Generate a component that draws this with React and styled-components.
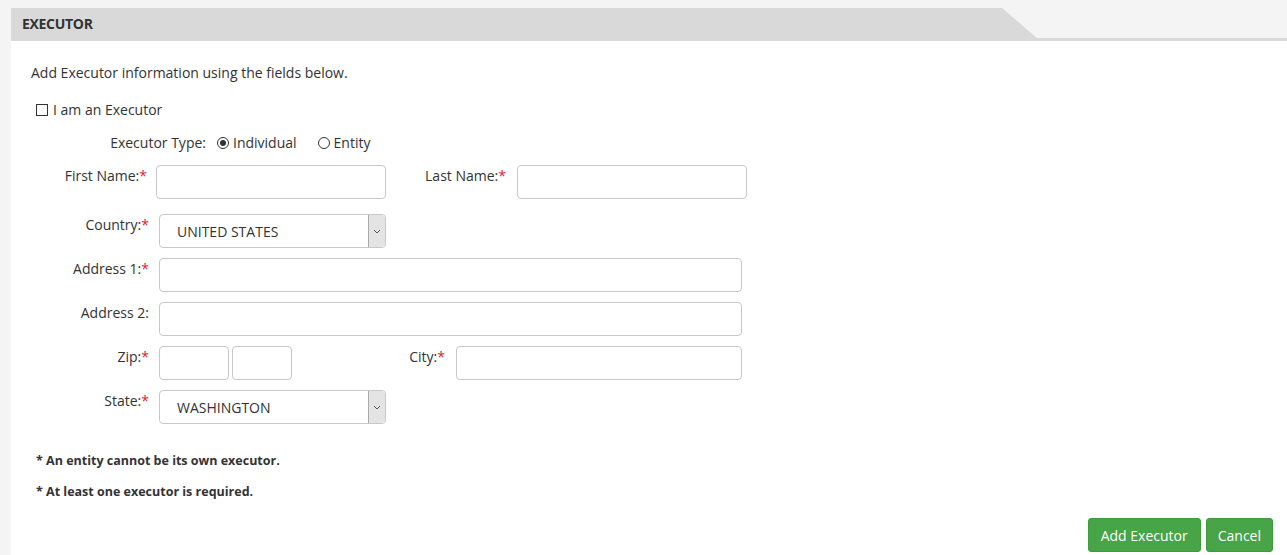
import React from 'react'
import styled, { createGlobalStyle } from 'styled-components'

const Global = createGlobalStyle`
  body {
    margin: 0;
    background: #f4f4f4;
    font-family: 'Open Sans', 'Liberation Sans', sans-serif;
    color: #333;
  }
`

const Page = styled.div`
  padding: 8px 0 0 11px;
`

const Panel = styled.section`
  background: #fff;
  min-height: 547px;
`

const Header = styled.div`
  height: 30px;
  background: #f4f4f4;
  border-bottom: 3px solid #d9d9d9;
`

const Tab = styled.div`
  width: 1026px;
  height: 30px;
  background: #d9d9d9;
  clip-path: polygon(0 0, 991px 0, 1026px 100%, 0 100%);
  display: flex;
  align-items: center;
  padding-left: 11px;
  box-sizing: border-box;
  font-size: 14px;
  font-weight: 700;
  color: #333;
  letter-spacing: -0.3px;
`

const Body = styled.div`
  padding: 23px 14px 0 20px;
  font-size: 14px;
  line-height: 18px;
`

const Intro = styled.p`
  margin: 0;
`

const CheckRow = styled.label`
  display: flex;
  align-items: center;
  margin: 19px 0 0 5px;
  gap: 5px;
`

const Box = styled.span`
  width: 10px;
  height: 10px;
  border: 1px solid #333;
  background: #fff;
`

const TypeRow = styled.div`
  display: flex;
  align-items: center;
  margin-top: 15px;
`

const Radio = styled.label`
  display: flex;
  align-items: center;
  gap: 4px;
  margin-right: 21px;
`

const Dot = styled.span`
  width: 10px;
  height: 10px;
  border-radius: 50%;
  border: 1px solid #333;
  display: flex;
  align-items: center;
  justify-content: center;
  &::after {
    content: '';
    width: 6px;
    height: 6px;
    border-radius: 50%;
    background: ${p => (p.$on ? '#333' : 'transparent')};
  }
`

const Row = styled.div`
  display: flex;
  align-items: flex-start;
  margin-top: ${p => p.$top || 10}px;
`

const Label = styled.span`
  width: ${p => p.$w}px;
  margin-right: ${p => p.$gap || 10}px;
  text-align: right;
  padding-top: 2px;
  flex-shrink: 0;
  white-space: nowrap;
`

const Req = styled.span`
  color: #d9232d;
`

const Input = styled.div`
  width: ${p => p.$w}px;
  height: 34px;
  box-sizing: border-box;
  border: 1px solid #c8c8c8;
  border-radius: 4px;
  background: #fff;
  margin-right: ${p => p.$mr || 0}px;
`

const Select = styled.div`
  width: 227px;
  height: 34px;
  box-sizing: border-box;
  border: 1px solid #c8c8c8;
  border-radius: 4px;
  display: flex;
  align-items: center;
  overflow: hidden;
`

const SelectText = styled.span`
  flex: 1;
  padding: 2px 0 0 17px;
  font-size: 14px;
  color: #333;
`

const Arrow = styled.span`
  width: 16px;
  height: 100%;
  background: #e4e4e4;
  border-left: 1px solid #aaa;
  display: flex;
  align-items: center;
  justify-content: center;
`

const Note = styled.p`
  margin: ${p => p.$top}px 0 0 5px;
  font-size: 12.5px;
  font-weight: 700;
  line-height: 18px;
`

const Actions = styled.div`
  display: flex;
  justify-content: flex-end;
  gap: 5px;
  margin-top: 17px;
`

const Button = styled.button`
  height: 34px;
  padding: 0 12px;
  background: #47a447;
  border: 1px solid #3f9a3f;
  border-radius: 3px;
  color: #fff;
  font-family: inherit;
  font-size: 14px;
`

const Chevron = () => (
  <svg width="8" height="5" viewBox="0 0 8 5">
    <path d="M1 1l3 3 3-3" fill="none" stroke="#555" strokeWidth="1" />
  </svg>
)

const Drop = ({ value }) => (
  <Select>
    <SelectText>{value}</SelectText>
    <Arrow><Chevron /></Arrow>
  </Select>
)

export default function App() {
  return (
    <>
      <Global />
      <Page>
        <Panel>
          <Header>
            <Tab>EXECUTOR</Tab>
          </Header>
          <Body>
            <Intro>Add Executor information using the fields below.</Intro>
            <CheckRow><Box />I am an Executor</CheckRow>
            <TypeRow>
              <Label $w={175} $gap={11} style={{ paddingTop: 0 }}>Executor Type:</Label>
              <Radio><Dot $on />Individual</Radio>
              <Radio><Dot />Entity</Radio>
            </TypeRow>

            <Row $top={13}>
              <Label $w={116} $gap={9}>First Name:<Req>*</Req></Label>
              <Input $w={230} />
              <Label $w={120} $gap={11}>Last Name:<Req>*</Req></Label>
              <Input $w={230} />
            </Row>
            <Row $top={15}>
              <Label $w={118}>Country:<Req>*</Req></Label>
              <Drop value="UNITED STATES" />
            </Row>
            <Row>
              <Label $w={118}>Address 1:<Req>*</Req></Label>
              <Input $w={583} />
            </Row>
            <Row>
              <Label $w={118}>Address 2:</Label>
              <Input $w={583} />
            </Row>
            <Row>
              <Label $w={118}>Zip:<Req>*</Req></Label>
              <Input $w={70} $mr={3} />
              <Input $w={60} />
              <Label $w={153} $gap={11}>City:<Req>*</Req></Label>
              <Input $w={286} />
            </Row>
            <Row>
              <Label $w={118}>State:<Req>*</Req></Label>
              <Drop value="WASHINGTON" />
            </Row>

            <Note $top={28}>* An entity cannot be its own executor.</Note>
            <Note $top={13}>* At least one executor is required.</Note>

            <Actions>
              <Button>Add Executor</Button>
              <Button style={{ padding: '0 11px' }}>Cancel</Button>
            </Actions>
          </Body>
        </Panel>
      </Page>
    </>
  )
}
